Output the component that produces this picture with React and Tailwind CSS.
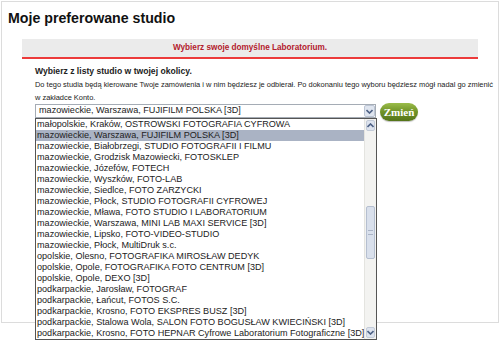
import React from 'react';

const studios = [
    'małopolskie, Kraków, OSTROWSKI FOTOGRAFIA CYFROWA',
    'mazowieckie, Warszawa, FUJIFILM POLSKA [3D]',
    'mazowieckie, Białobrzegi, STUDIO FOTOGRAFII I FILMU',
    'mazowieckie, Grodzisk Mazowiecki, FOTOSKLEP',
    'mazowieckie, Józefów, FOTECH',
    'mazowieckie, Wyszków, FOTO-LAB',
    'mazowieckie, Siedlce, FOTO ZARZYCKI',
    'mazowieckie, Płock, STUDIO FOTOGRAFII CYFROWEJ',
    'mazowieckie, Mława, FOTO STUDIO I LABORATORIUM',
    'mazowieckie, Warszawa, MINI LAB MAXI SERVICE [3D]',
    'mazowieckie, Lipsko, FOTO-VIDEO-STUDIO',
    'mazowieckie, Płock, MultiDruk s.c.',
    'opolskie, Olesno, FOTOGRAFIKA MIROSŁAW DEDYK',
    'opolskie, Opole, FOTOGRAFIKA FOTO CENTRUM [3D]',
    'opolskie, Opole, DEXO [3D]',
    'podkarpackie, Jarosław, FOTOGRAF',
    'podkarpackie, Łańcut, FOTOS S.C.',
    'podkarpackie, Krosno, FOTO EKSPRES BUSZ [3D]',
    'podkarpackie, Stalowa Wola, SALON FOTO BOGUSŁAW KWIECIŃSKI [3D]',
    'podkarpackie, Krosno, FOTO HEPNAR Cyfrowe Laboratorium Fotograficzne [3D]',
];

const selected = 'mazowieckie, Warszawa, FUJIFILM POLSKA [3D]';

function Chevron({ up }) {
    return (
        <svg width="7" height="5" viewBox="0 0 7 5">
            <path
                d={up ? 'M0.5 4 L3.5 1 L6.5 4' : 'M0.5 1 L3.5 4 L6.5 1'}
                fill="none"
                stroke="#4d6185"
                strokeWidth="1.6"
            />
        </svg>
    );
}

function ScrollBar() {
    return (
        <div className="w-[12px] flex flex-col bg-[#f3f3f1] border-l border-[#e4e4e0]">
            <div className="h-[11px] mx-[1px] mt-[1px] flex items-center justify-center bg-[#dde3ee] border border-[#c3cbd8] rounded-[2px]">
                <Chevron up />
            </div>
            <div className="h-[75px]" />
            <div className="h-[53px] mx-[1px] bg-[#d9e0ec] border border-[#b5bfd0] rounded-[2px] flex items-center justify-center">
                <div className="w-[5px] h-[5px] border-y border-[#aab4c6]" />
            </div>
            <div className="flex-1" />
            <div className="h-[11px] mx-[1px] mb-[1px] flex items-center justify-center bg-[#dde3ee] border border-[#c3cbd8] rounded-[2px]">
                <Chevron />
            </div>
        </div>
    );
}

export default function App() {
    return (
        <div className="w-[500px] h-[361px] bg-white relative" style={{ fontFamily: '"Liberation Sans", Arial, sans-serif' }}>
            <div className="ml-[1px] mr-[1px] mt-[1px] h-[322px] border border-[#dcdcdc]">
                <h1 className="pl-[6px] pt-[7px] text-[14.2px] leading-[18px] font-bold text-[#111]">Moje preferowane studio</h1>

                <div className="ml-[20px] mr-[20px] mt-[12px] h-[20px] bg-[#ebebeb] border-b-2 border-[#ec3b3b] flex items-center justify-center">
                    <span className="text-[8.2px] font-bold text-[#b3202c]">Wybierz swoje domyślne Laboratorium.</span>
                </div>

                <div className="pl-[33px] pt-[6px] text-[#222]">
                    <p className="text-[8.6px] leading-[13px] font-bold">Wybierz z listy studio w twojej okolicy.</p>
                    <p className="text-[7.45px] leading-[13px]">
                        Do tego studia będą kierowane Twoje zamówienia i w nim będziesz je odbierał. Po dokonaniu tego wyboru będziesz mógł nadal go zmienić w zakładce Konto.
                    </p>

                    <div className="flex items-start gap-[4px] relative">
                        <div className="w-[341px] h-[14px] border border-[#a5acb5] bg-white flex items-center">
                            <span className="flex-1 pl-[3px] text-[9.1px] text-[#222] whitespace-nowrap overflow-hidden">{selected}</span>
                            <div className="w-[11px] h-[12px] flex items-center justify-center bg-[#dfe5ef] border border-[#bcc5d4] rounded-[2px]">
                                <Chevron />
                            </div>
                        </div>
                        <button className="w-[38px] h-[18px] -mt-[1px] rounded-full bg-gradient-to-b from-[#9bbd4a] via-[#6f9226] to-[#547419] text-white text-[11px] font-bold shadow-[0_1px_1px_rgba(0,0,0,0.25)]" style={{ fontFamily: '"Liberation Serif", "Times New Roman", serif' }}>
                            Zmień
                        </button>

                        <div className="absolute left-0 top-[14px] w-[342px] h-[222px] border border-[#555] bg-white flex z-10">
                            <ul className="flex-1 overflow-hidden">
                                {studios.map((s) => (
                                    <li
                                        key={s}
                                        className={`h-[11px] leading-[11px] pl-[1px] text-[9.1px] whitespace-nowrap ${s === selected ? 'bg-[#aab3c4] text-[#222]' : 'text-[#222]'}`}
                                    >
                                        {s}
                                    </li>
                                ))}
                            </ul>
                            <ScrollBar />
                        </div>
                    </div>
                </div>
            </div>
        </div>
    );
}
